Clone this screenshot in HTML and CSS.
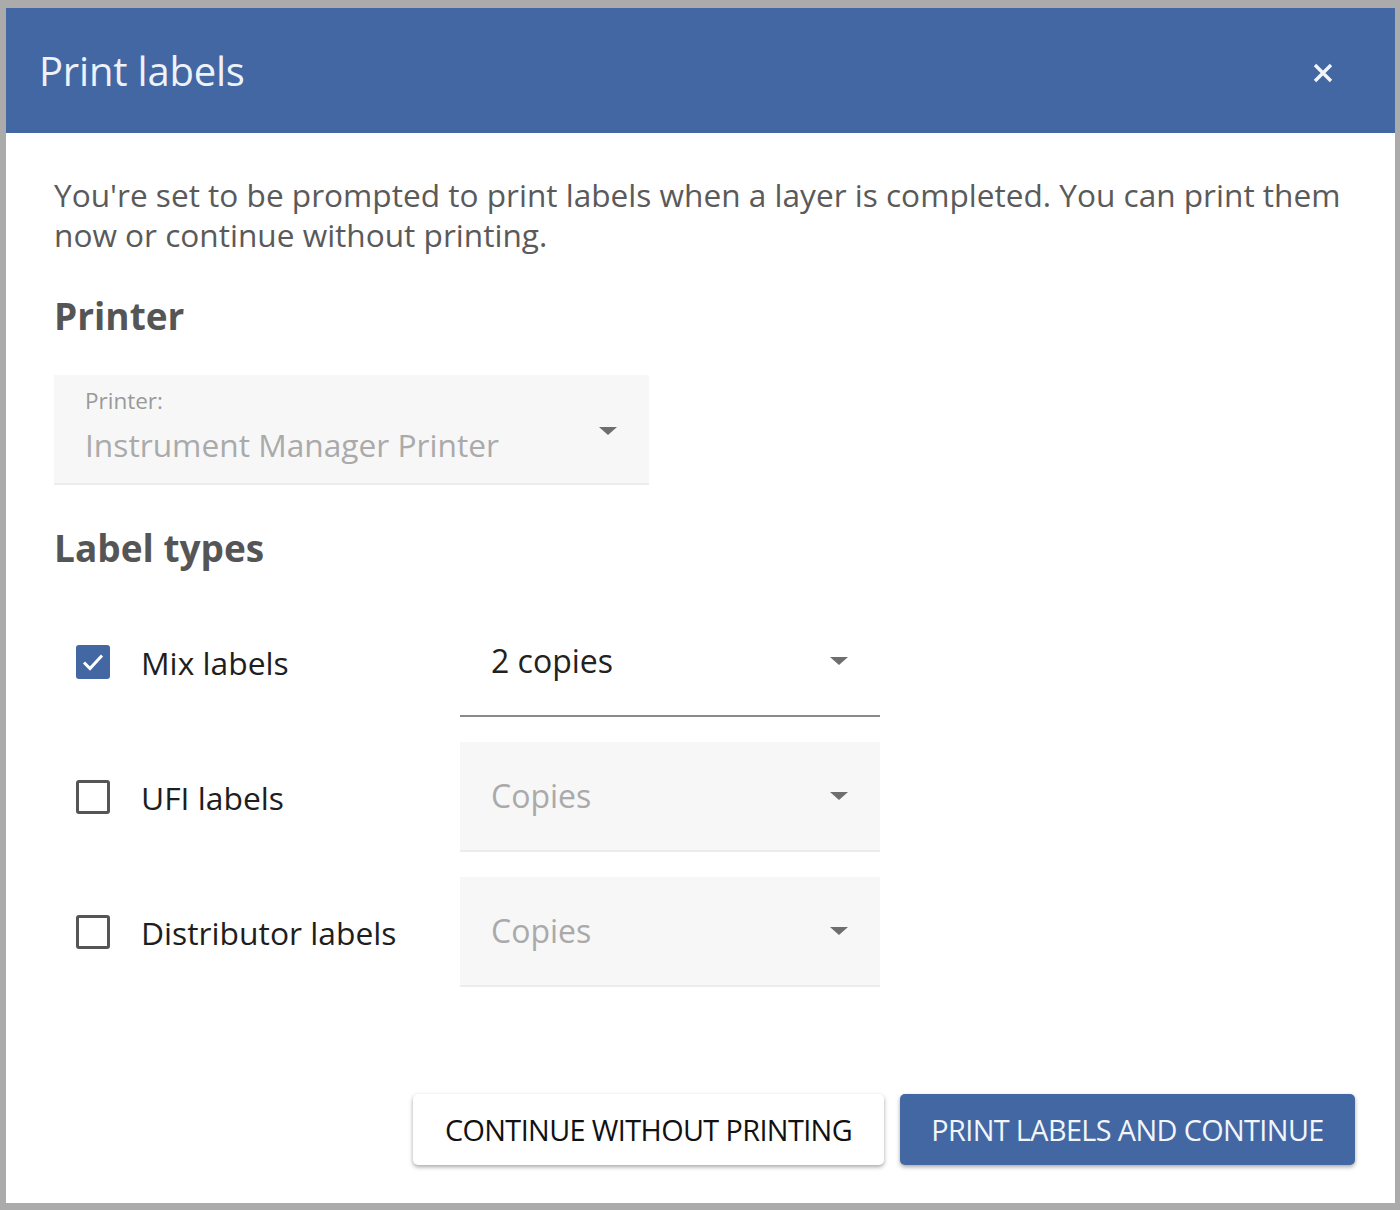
FILE: index.html
```html
<!DOCTYPE html>
<html>
    <head>
        <meta charset="utf-8">
        <title>Print labels</title>

        <link rel="stylesheet" href="styles.css">
    </head>
    <body>

        <div class="backdrop">
            <!-- dialog shown when a layer is completed -->
            <div class="dialog">
                <header class="dialog-header">
                    <h1>Print labels</h1>
                    <button class="close-button" aria-label="Close">
                        <svg width="22" height="22" viewBox="0 0 22 22">
                            <path d="M3 3 L19 19 M19 3 L3 19" stroke="#f2f5fa" stroke-width="3.4" stroke-linecap="butt"/>
                        </svg>
                    </button>
                </header>

                <div class="dialog-body">
                    <p class="intro">You're set to be prompted to print labels when a layer is completed. You can print them now or continue without printing.</p>

                    <h2>Printer</h2>

                    <div class="field field-filled printer-field">
                        <div class="field-text">
                            <span class="field-label">Printer:</span>
                            <span class="field-value">Instrument Manager Printer</span>
                        </div>
                        <span class="caret"></span>
                    </div>

                    <h2 class="label-types">Label types</h2>

                    <div class="label-rows">
                        <div class="label-row">
                            <label class="check">
                                <span class="box checked">
                                    <svg width="34" height="34" viewBox="0 0 34 34">
                                        <path d="M8 17.5 L14 23.5 L26 10.5" fill="none" stroke="#fff" stroke-width="3"/>
                                    </svg>
                                </span>
                                Mix labels
                            </label>
                            <div class="field field-line">
                                <span class="field-value dark">2 copies</span>
                                <span class="caret"></span>
                            </div>
                        </div>

                        <div class="label-row">
                            <label class="check">
                                <span class="box"></span>
                                UFI labels
                            </label>
                            <div class="field field-filled">
                                <span class="field-value">Copies</span>
                                <span class="caret"></span>
                            </div>
                        </div>

                        <div class="label-row">
                            <label class="check">
                                <span class="box"></span>
                                Distributor labels
                            </label>
                            <div class="field field-filled">
                                <span class="field-value">Copies</span>
                                <span class="caret"></span>
                            </div>
                        </div>
                    </div>

                    <div class="actions">
                        <button class="btn btn-plain">CONTINUE WITHOUT PRINTING</button>
                        <button class="btn btn-primary">PRINT LABELS AND CONTINUE</button>
                    </div>
                </div>
            </div>
        </div>

    </body>
</html>
```

FILE: styles.css
```css
/* Page behind the dialog */

html, body {
    margin: 0;
    height: 100%;
}

body {
    background: #ababab;
    font-family: "Open Sans", "Noto Sans", sans-serif;
}

.backdrop {
    padding: 8px 5px 0 6px;
}

/* Dialog */

.dialog {
    display: flex;
    flex-direction: column;
    height: 1195px;
    background: #fff;
}

.dialog-header {
    display: flex;
    justify-content: space-between;
    align-items: center;
    height: 125px;
    padding: 0 61px 0 33px;
    box-sizing: border-box;
    background: #4267a3;
}

.dialog-header h1 {
    margin: 0;
    font-size: 40px;
    font-weight: 400;
    color: #eef2f8;
    letter-spacing: -0.2px;
}

.close-button {
    display: flex;
    padding: 0;
    border: 0;
    background: none;
    margin-top: 4px;
}

.dialog-body {
    display: flex;
    flex-direction: column;
    flex: 1;
    padding: 42px 40px 38px 48px;
}

.intro {
    margin: 0;
    font-size: 31.6px;
    line-height: 40px;
    color: #5a5a5a;
}

h2 {
    margin: 39px 0 37px;
    font-size: 37px;
    line-height: 44px;
    font-weight: 700;
    color: #555;
}

/* Select fields */

.field {
    display: flex;
    align-items: center;
    justify-content: space-between;
    box-sizing: border-box;
    padding: 0 32px 0 31px;
}

.field-filled {
    background: #f7f7f7;
    border-bottom: 2px solid #ececec;
    height: 110px;
}

.field-line {
    height: 110px;
    border-bottom: 2px solid #8a8a8a;
}

.printer-field {
    width: 595px;
    padding-right: 32px;
}

.field-text {
    display: flex;
    flex-direction: column;
    margin-top: -12px;
}

.field-label {
    font-size: 22.5px;
    line-height: 44px;
    color: #9a9a9a;
}

.field-value {
    font-size: 32px;
    line-height: 44px;
    color: #aaa;
}

.printer-field .field-value {
    font-size: 31.7px;
}

.field-value.dark {
    color: #222;
}

.caret {
    width: 0;
    height: 0;
    border-left: 9px solid transparent;
    border-right: 9px solid transparent;
    border-top: 8px solid #6e6e6e;
}

.printer-field .caret {
    margin-top: 4px;
}

.label-types {
    margin-top: 41px;
}

/* Label rows */

.label-rows {
    display: flex;
    flex-direction: column;
    gap: 25px;
}

.label-row {
    display: flex;
    align-items: center;
}

.label-row .field {
    width: 420px;
}

.check {
    display: flex;
    align-items: center;
    gap: 31px;
    width: 406px;
    box-sizing: border-box;
    padding-left: 22px;
    font-size: 31.8px;
    color: #1e1e1e;
}

.box {
    display: flex;
    width: 34px;
    height: 34px;
    box-sizing: border-box;
    border: 3px solid #555;
    border-radius: 3px;
}

.box.checked {
    border: 0;
    background: #4267a3;
}

/* Buttons */

.actions {
    display: flex;
    justify-content: flex-end;
    gap: 16px;
    margin-top: auto;
}

.btn {
    height: 71px;
    padding: 0;
    border: 0;
    border-radius: 5px;
    font-family: "Open Sans", sans-serif;
    font-size: 28.8px;
    letter-spacing: -0.6px;
    box-shadow: 0 2px 4px rgba(0, 0, 0, 0.35);
}

.btn-plain {
    width: 471px;
    background: #fff;
    color: #111;
}

.btn-primary {
    width: 455px;
    background: #4267a3;
    color: #f2f5fa;
}
```
